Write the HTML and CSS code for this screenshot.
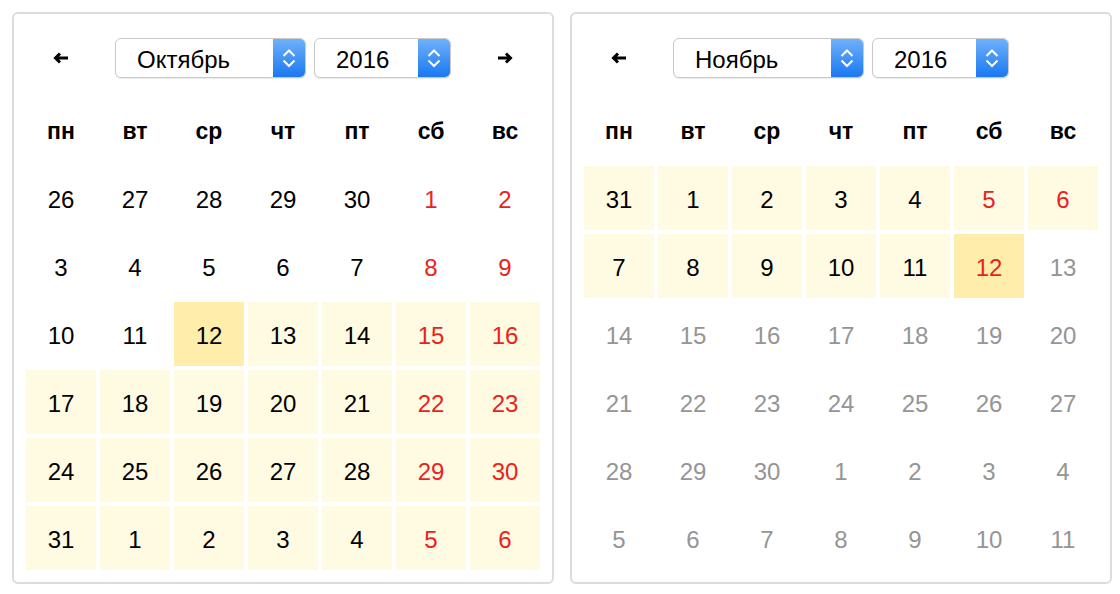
FILE: index.html
```html
<!DOCTYPE html>
<html lang="ru">
<head>
<meta charset="UTF-8">
<title>Календарь</title>
<link rel="stylesheet" href="styles.css">
</head>
<body>

    <!-- October -->
    <div class="calendar">
        <div class="nav">
            <button class="arrow arrow-prev"><svg width="16" height="12" viewBox="0 0 16 12"><path d="M15 6H3M7 1.5L2.5 6 7 10.5" fill="none" stroke="#000" stroke-width="3"/></svg></button>
            <div class="selects">
                <div class="select select-month">
                    <span class="select-text">Октябрь</span>
                    <span class="select-btn"><svg width="14" height="26" viewBox="0 0 14 26"><path d="M1.5 11l5.5-5.5 5.5 5.5M1.5 15.5l5.5 5.5 5.5-5.5" fill="none" stroke="#fff" stroke-width="2"/></svg></span>
                </div>
                <div class="select select-year">
                    <span class="select-text">2016</span>
                    <span class="select-btn"><svg width="14" height="26" viewBox="0 0 14 26"><path d="M1.5 11l5.5-5.5 5.5 5.5M1.5 15.5l5.5 5.5 5.5-5.5" fill="none" stroke="#fff" stroke-width="2"/></svg></span>
                </div>
            </div>
            <button class="arrow arrow-next"><svg width="16" height="12" viewBox="0 0 16 12"><path d="M1 6h12M9 1.5L13.5 6 9 10.5" fill="none" stroke="#000" stroke-width="3"/></svg></button>
        </div>
        <div class="grid">
            <div class="wd">пн</div><div class="wd">вт</div><div class="wd">ср</div><div class="wd">чт</div><div class="wd">пт</div><div class="wd">сб</div><div class="wd">вс</div>

            <div class="day">26</div><div class="day">27</div><div class="day">28</div><div class="day">29</div><div class="day">30</div><div class="day red">1</div><div class="day red">2</div>
            <div class="day">3</div><div class="day">4</div><div class="day">5</div><div class="day">6</div><div class="day">7</div><div class="day red">8</div><div class="day red">9</div>
            <div class="day">10</div><div class="day">11</div><div class="day today">12</div><div class="day range">13</div><div class="day range">14</div><div class="day range red">15</div><div class="day range red">16</div>
            <div class="day range">17</div><div class="day range">18</div><div class="day range">19</div><div class="day range">20</div><div class="day range">21</div><div class="day range red">22</div><div class="day range red">23</div>
            <div class="day range">24</div><div class="day range">25</div><div class="day range">26</div><div class="day range">27</div><div class="day range">28</div><div class="day range red">29</div><div class="day range red">30</div>
            <div class="day range">31</div><div class="day range">1</div><div class="day range">2</div><div class="day range">3</div><div class="day range">4</div><div class="day range red">5</div><div class="day range red">6</div>
        </div>
    </div>

    <!-- November -->
    <div class="calendar">
        <div class="nav">
            <button class="arrow arrow-prev"><svg width="16" height="12" viewBox="0 0 16 12"><path d="M15 6H3M7 1.5L2.5 6 7 10.5" fill="none" stroke="#000" stroke-width="3"/></svg></button>
            <div class="selects">
                <div class="select select-month">
                    <span class="select-text">Ноябрь</span>
                    <span class="select-btn"><svg width="14" height="26" viewBox="0 0 14 26"><path d="M1.5 11l5.5-5.5 5.5 5.5M1.5 15.5l5.5 5.5 5.5-5.5" fill="none" stroke="#fff" stroke-width="2"/></svg></span>
                </div>
                <div class="select select-year">
                    <span class="select-text">2016</span>
                    <span class="select-btn"><svg width="14" height="26" viewBox="0 0 14 26"><path d="M1.5 11l5.5-5.5 5.5 5.5M1.5 15.5l5.5 5.5 5.5-5.5" fill="none" stroke="#fff" stroke-width="2"/></svg></span>
                </div>
            </div>
        </div>
        <div class="grid">
            <div class="wd">пн</div><div class="wd">вт</div><div class="wd">ср</div><div class="wd">чт</div><div class="wd">пт</div><div class="wd">сб</div><div class="wd">вс</div>

            <div class="day range">31</div><div class="day range">1</div><div class="day range">2</div><div class="day range">3</div><div class="day range">4</div><div class="day range red">5</div><div class="day range red">6</div>
            <div class="day range">7</div><div class="day range">8</div><div class="day range">9</div><div class="day range">10</div><div class="day range">11</div><div class="day today red">12</div><div class="day muted">13</div>
            <div class="day muted">14</div><div class="day muted">15</div><div class="day muted">16</div><div class="day muted">17</div><div class="day muted">18</div><div class="day muted">19</div><div class="day muted">20</div>
            <div class="day muted">21</div><div class="day muted">22</div><div class="day muted">23</div><div class="day muted">24</div><div class="day muted">25</div><div class="day muted">26</div><div class="day muted">27</div>
            <div class="day muted">28</div><div class="day muted">29</div><div class="day muted">30</div><div class="day muted">1</div><div class="day muted">2</div><div class="day muted">3</div><div class="day muted">4</div>
            <div class="day muted">5</div><div class="day muted">6</div><div class="day muted">7</div><div class="day muted">8</div><div class="day muted">9</div><div class="day muted">10</div><div class="day muted">11</div>
        </div>
    </div>

</body>
</html>
```

FILE: styles.css
```css
body {
    background-color: #fff;
    color: #000;
    font-family: 'Liberation Sans', Arial, sans-serif;
    margin: 0;
    padding: 12px 8px 0 12px;
    display: flex;
    gap: 16px;
}

.calendar {
    border: 2px solid #dcdcdc;
    border-radius: 6px;
    padding: 12px;
}

/* Header */
.nav {
    display: grid;
    grid-template-columns: 70px 1fr 70px;
    align-items: center;
    height: 64px;
    margin-bottom: 8px;
}

.arrow {
    grid-row: 1;
    background: none;
    border: none;
    padding: 0;
    height: 20px;
    display: flex;
    justify-content: center;
    align-items: center;
    cursor: pointer;
}

.arrow-prev {
    grid-column: 1;
}

.arrow-next {
    grid-column: 3;
}

.selects {
    grid-column: 2;
    grid-row: 1;
    display: flex;
    justify-content: center;
    gap: 8px;
}

.select {
    display: flex;
    height: 40px;
    box-sizing: border-box;
    border: 1px solid #c9c9c9;
    border-radius: 6px;
    overflow: hidden;
    background: #fff;
    box-shadow: 0 1px 1px rgba(0, 0, 0, 0.08);
}

.select-month {
    width: 191px;
}

.select-year {
    width: 137px;
}

.select-text {
    flex: 1;
    font-size: 24px;
    line-height: 38px;
    padding-top: 2px;
    padding-left: 21px;
}

.select-btn {
    width: 32px;
    display: flex;
    justify-content: center;
    align-items: center;
    background: linear-gradient(#6fb1fb, #1a78f2);
}

/* Days */
.grid {
    display: grid;
    grid-template-columns: repeat(7, 70px);
    grid-auto-rows: 64px;
    gap: 4px;
}

.wd {
    display: flex;
    justify-content: center;
    align-items: center;
    padding-top: 3px;
    font-size: 23px;
    font-weight: 700;
}

.day {
    display: flex;
    justify-content: center;
    align-items: center;
    padding-top: 3px;
    font-size: 24px;
}

.range {
    background-color: #fffae2;
}

.today {
    background-color: #ffeeab;
}

.red {
    color: #e8231c;
}

.muted {
    color: #959595;
}
```
